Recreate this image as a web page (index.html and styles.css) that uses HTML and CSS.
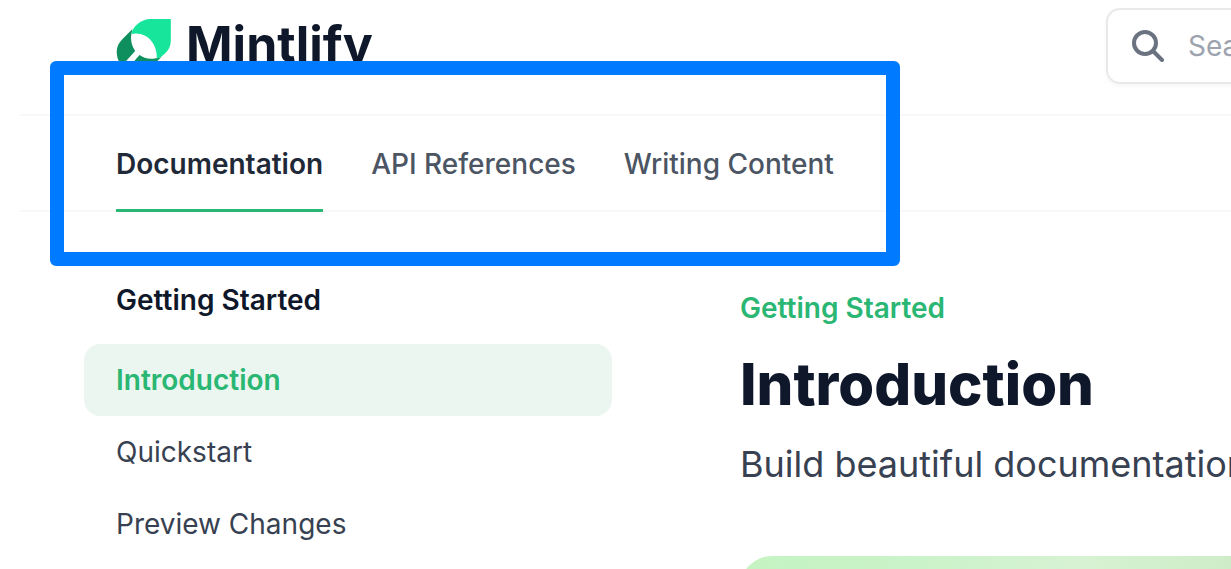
FILE: index.html
```html
<!DOCTYPE html>
<html lang="en">
<head>
<meta charset="utf-8">
<title>Introduction - Mintlify</title>
<link rel="stylesheet" href="styles.css">
</head>
<body>
<header class="header">
  <div class="topbar">
    <a class="brand" href="#">
      <svg class="brand-mark" viewBox="50 57 165 162" aria-hidden="true">
        <path fill="#0f8f5e" d="M98 87 L66 119 C53 132 48 149 52 168 C53 176 56 182 60 188 L74 188 L106 153 C96 138 91 120 95 100 Z"/>
        <path fill="#0f8f5e" d="M100 187 L119 165 C135 177 155 180 185 171 L165 190 C148 205 120 203 100 187 Z"/>
        <path fill="#17e59c" d="M213 57 H156 C137 57 124 62 109 76 C101 84 97 92 95 102 C138 92 174 130 171 176 C181 174 188 168 196 160 C209 147 213 136 213 117 Z"/>
      </svg>
      <span class="brand-name">Mintlify</span>
    </a>
    <label class="search">
      <svg class="search-icon" viewBox="0 0 32 32" aria-hidden="true">
        <circle cx="13" cy="13" r="11"/>
        <path d="M21 21 L30 30"/>
      </svg>
      <input class="search-input" type="search" placeholder="Search..." aria-label="Search">
    </label>
  </div>
  <nav class="tabs" aria-label="Sections">
    <a class="tab tab-active" href="#">Documentation</a>
    <a class="tab" href="#">API References</a>
    <a class="tab" href="#">Writing Content</a>
  </nav>
</header>
<div class="layout">
  <aside class="sidebar">
    <h2 class="sidebar-title">Getting Started</h2>
    <nav class="menu" aria-label="Pages">
      <a class="menu-link menu-active" href="#">Introduction</a>
      <a class="menu-link" href="#">Quickstart</a>
      <a class="menu-link" href="#">Preview Changes</a>
    </nav>
  </aside>
  <main class="content">
    <p class="eyebrow">Getting Started</p>
    <h1 class="title">Introduction</h1>
    <p class="lead">Build beautiful documentation</p>
    <div class="hero"></div>
  </main>
</div>
<div class="highlight"></div>
</body>
</html>
```
FILE: styles.css
```css
* {
  box-sizing: border-box;
}

body {
  position: relative;
  height: 100vh;
  margin: 0;
  overflow: hidden;
  background: #fff;
  color: #374151;
  font-family: Inter, "Liberation Sans", sans-serif;
  font-size: 28px;
  line-height: 40px;
}

a {
  color: inherit;
  text-decoration: none;
}

h1, h2, p {
  margin: 0;
}

.header {
  margin-left: 20px;
}

.topbar {
  display: flex;
  align-items: flex-start;
  justify-content: space-between;
  padding: 8px 0 30px 96px;
  border-bottom: 2px solid #f8f8f9;
}

.brand {
  display: flex;
  align-items: center;
  gap: 14px;
  height: 76px;
}

.brand-mark {
  width: 56px;
  height: 54px;
}

.brand-name {
  padding-bottom: 4px;
  color: #0f172a;
  font-size: 50px;
  font-weight: 700;
}

.search {
  display: flex;
  flex: none;
  align-items: center;
  gap: 24px;
  width: 480px;
  height: 76px;
  margin-right: -355px;
  padding: 0 24px;
  border: 2px solid #e8e9ea;
  border-radius: 14px;
  box-shadow: 0 2px 4px rgba(0, 0, 0, 0.04);
}

.search-icon {
  width: 32px;
  height: 32px;
  fill: none;
  stroke: #6b7280;
  stroke-width: 4;
  stroke-linecap: round;
}

.search-input {
  flex: 1;
  min-width: 0;
  padding: 0;
  border: 0;
  outline: 0;
  background: none;
  color: #374151;
  font: inherit;
}

.search-input::placeholder {
  color: #9ca3af;
  opacity: 1;
}

.tabs {
  display: flex;
  gap: 48px;
  padding-left: 96px;
  border-bottom: 2px solid #f8f8f9;
  color: #4b5563;
  font-weight: 500;
}

.tab {
  margin-bottom: -2px;
  padding: 28px 0 25px;
  border-bottom: 3px solid transparent;
}

.tab-active {
  border-color: #2ab673;
  color: #1f2937;
  font-weight: 600;
}

.layout {
  display: grid;
  grid-template-columns: 528px minmax(0, 1fr);
  gap: 128px;
  padding-left: 84px;
}

.sidebar {
  padding-top: 68px;
}

.sidebar-title {
  padding-left: 32px;
  color: #0f172a;
  font-size: 28px;
  font-weight: 600;
}

.menu {
  display: flex;
  flex-direction: column;
  margin-top: 24px;
}

.menu-link {
  padding: 16px 32px;
  border-radius: 16px;
}

.menu-active {
  background: #ebf6f0;
  color: #2ab673;
  font-weight: 600;
}

.content {
  padding-top: 76px;
}

.eyebrow {
  color: #2ab673;
  font-weight: 600;
}

.title {
  margin-top: 20px;
  color: #0f172a;
  font-size: 58px;
  font-weight: 800;
  line-height: 72px;
}

.lead {
  margin-top: 16px;
  font-size: 36px;
  line-height: 56px;
  white-space: nowrap;
}

.hero {
  height: 400px;
  margin-top: 64px;
  border-radius: 32px 0 0 32px;
  background: linear-gradient(100deg, #c5f4c2 0%, #c9f3c8 28%, #d6f2d2 60%, #cbebc3 100%);
}

.highlight {
  position: absolute;
  top: 61px;
  left: 50px;
  width: 850px;
  height: 205px;
  border: 14px solid #007aff;
  border-radius: 6px;
  pointer-events: none;
}
```
